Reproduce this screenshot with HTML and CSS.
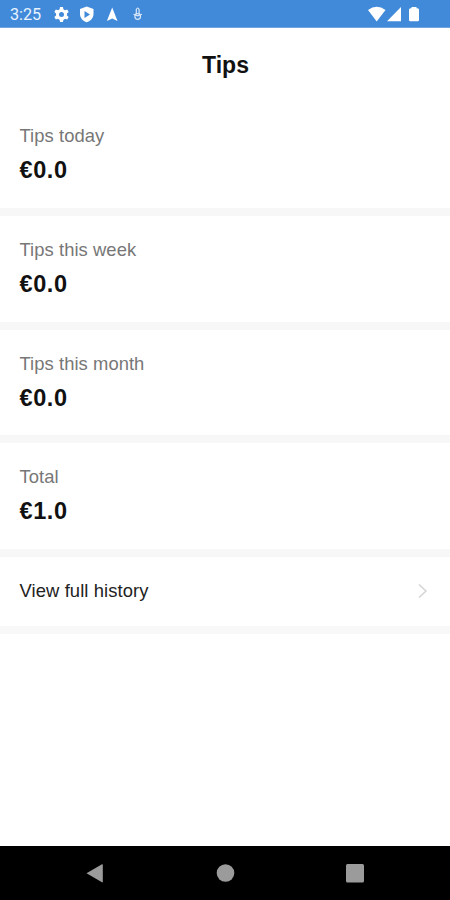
FILE: index.html
```html
<!DOCTYPE html>
<html lang="en">
<head>
<meta charset="utf-8">
<title>Tips</title>
<link rel="stylesheet" href="styles.css">
</head>
<body>
<div class="status">
  <span class="clock">3:25</span>
  <svg class="status-left" width="94" height="18" viewBox="52 5 94 18" fill="#fff">
    <g transform="translate(61.5 14.5)">
      <circle r="4" fill="none" stroke="#fff" stroke-width="3"/>
      <path d="M-2-4.500-1.500-7.400h3L2-4.500zM-2 4.500-1.500 7.400h3L2 4.500z"/>
      <path d="M-2-4.500-1.500-7.400h3L2-4.500zM-2 4.500-1.500 7.400h3L2 4.500z" transform="rotate(60)"/>
      <path d="M-2-4.500-1.500-7.400h3L2-4.500zM-2 4.500-1.500 7.400h3L2 4.500z" transform="rotate(120)"/>
    </g>
    <path fill-rule="evenodd" d="M86.700 6.500 93.500 9v5c0 4-3 7-6.800 8.300C83 21 80 18 80 14V9zM84.500 11v7l5.500-3.500z"/>
    <path d="M112.200 7.500 117.500 21l-5.300-2.500-5.300 2.500z"/>
    <g fill="none" stroke="#fff" stroke-width="1.200" opacity=".8">
      <path d="M136.300 14V9.500q1.400-3 2.800 0V14M133.500 14.300l4.200 1.500 4.200-1.500"/>
      <circle cx="137.700" cy="16.500" r="2.800"/>
    </g>
  </svg>
  <svg class="status-right" width="56" height="18" viewBox="366 5 56 18" fill="#fff">
    <path d="M368 10q8.700-6.500 17.500 0L376.700 21.500z"/>
    <path d="M401 7v14.300h-14z"/>
    <path d="M411.500 7h5v1.300h1q1.500 0 1.500 1.500V20q0 1.300-1.300 1.300h-7.400Q409 21.300 409 20V9.800q0-1.500 1.500-1.500h1z"/>
  </svg>
</div>
<main class="screen">
  <h1 class="title">Tips</h1>
  <section class="card"><div class="label">Tips today</div><div class="amount">€0.0</div></section>
  <section class="card"><div class="label">Tips this week</div><div class="amount">€0.0</div></section>
  <section class="card"><div class="label">Tips this month</div><div class="amount">€0.0</div></section>
  <section class="card"><div class="label">Total</div><div class="amount">€1.0</div></section>
  <div class="history"><span>View full history</span>
    <svg width="10" height="16" viewBox="0 0 10 16" fill="none" stroke="#d4d4d4" stroke-width="1.500"><path d="M1 1.500 8 8l-7 6.500"/></svg>
  </div>
</main>
<nav class="nav">
  <svg width="450" height="54" viewBox="0 0 450 54" fill="#9b9b9b">
    <path d="M86.500 27.300 102 18.200q.8-.3.800.6v17q0 .9-.8.500z"/>
    <circle cx="225.500" cy="27" r="8.800"/>
    <rect x="346" y="18" width="18" height="18.500" rx="1.500"/>
  </svg>
</nav>
</body>
</html>
```
FILE: styles.css
```css
* { box-sizing: border-box; }
body {
  margin: 0;
  height: 900px;
  display: flex;
  flex-direction: column;
  background: #fff;
  font-family: "Liberation Sans", Arial, sans-serif;
  color: #111;
}
.status {
  height: 28px;
  padding: 1px 28px 0 10px;
  display: flex;
  align-items: center;
  background: #4189d9;
  border-bottom: 1px solid #6ea6e2;
}
.clock {
  width: 42px;
  padding-top: 1px;
  font: 16.2px/18px Roboto, sans-serif;
  color: #e9f3ff;
}
.status-right { margin-left: auto; }
.screen { flex: 1; }
.title {
  margin: 0;
  height: 74px;
  padding-left: 1px;
  font-size: 23px;
  line-height: 74px;
  text-align: center;
}
.card {
  height: 113.8px;
  padding: 23px 19.5px 0;
  border-bottom: 8px solid #f7f7f7;
}
.label {
  font-size: 18.4px;
  line-height: 22px;
  letter-spacing: 0.06px;
  color: #777;
}
.amount {
  margin-top: 9px;
  font-size: 23.5px;
  line-height: 28px;
  font-weight: 700;
  letter-spacing: 0.6px;
}
.history {
  height: 76.5px;
  padding: 0 22px 0 19.5px;
  display: flex;
  align-items: center;
  justify-content: space-between;
  border-bottom: 8px solid #f8f8f8;
  font-size: 18.4px;
  letter-spacing: 0.1px;
  color: #222;
}
.nav {
  height: 54px;
  background: #000;
}
.nav svg { display: block; }
```
